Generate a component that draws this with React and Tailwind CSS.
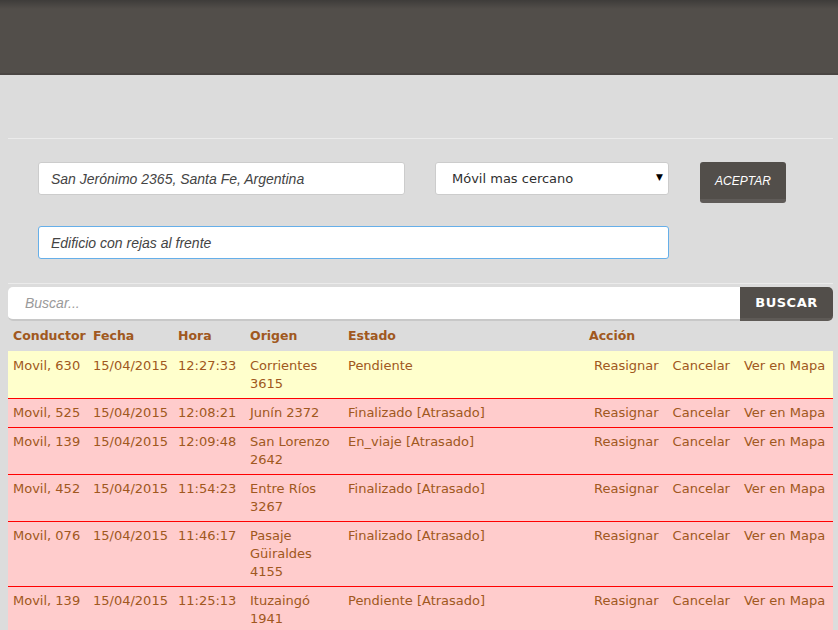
import React from 'react';

const rows = [
  { id: 1, conductor: 'Movil, 630', fecha: '15/04/2015', hora: '12:27:33', origen: 'Corrientes 3615', estado: 'Pendiente', late: false },
  { id: 2, conductor: 'Movil, 525', fecha: '15/04/2015', hora: '12:08:21', origen: 'Junín 2372', estado: 'Finalizado [Atrasado]', late: true },
  { id: 3, conductor: 'Movil, 139', fecha: '15/04/2015', hora: '12:09:48', origen: 'San Lorenzo 2642', estado: 'En_viaje [Atrasado]', late: true },
  { id: 4, conductor: 'Movil, 452', fecha: '15/04/2015', hora: '11:54:23', origen: 'Entre Ríos 3267', estado: 'Finalizado [Atrasado]', late: true },
  { id: 5, conductor: 'Movil, 076', fecha: '15/04/2015', hora: '11:46:17', origen: 'Pasaje Güiraldes 4155', estado: 'Finalizado [Atrasado]', late: true },
  { id: 6, conductor: 'Movil, 139', fecha: '15/04/2015', hora: '11:25:13', origen: 'Ituzaingó 1941', estado: 'Pendiente [Atrasado]', late: true },
];

const App = () => {
  return (
    <div className="min-h-screen bg-[#dcdcdc] font-['DejaVu_Sans',sans-serif]">
      <header className="h-[75px] bg-[linear-gradient(to_bottom,#3e3c3a,#524e4a_9px,#524e4a)] border-b-2 border-[#4a4643]" />

      <main className="pl-[8px] pr-[5px]">
        <div className="mt-[63px] h-px bg-[#ebebeb]" />

        <div className="pl-[30px] pt-[23px] pb-[24px]">
          <div className="flex items-start h-[33px] overflow-visible">
            <input
              readOnly
              defaultValue="San Jerónimo 2365, Santa Fe, Argentina"
              className="block shrink-0 w-[367px] h-[33px] px-[12px] bg-white border border-[#cccccc] rounded-[3px] font-['Liberation_Sans',sans-serif] italic text-[14px] text-[#444] outline-none"
            />
            <div className="relative shrink-0 ml-[30px] w-[234px] h-[33px] bg-white border border-[#cccccc] rounded-[3px] flex items-center pl-[16px] text-[13px] text-[#2f2f2f]">
              Móvil mas cercano
              <span className="absolute right-[5px] top-[8px] text-[9px] text-black">▼</span>
            </div>
            <button className="shrink-0 ml-[31px] w-[86px] h-[41px] bg-[#524e4a] border-b-[4px] border-[#5f5b58] rounded-[3px] font-['Liberation_Sans',sans-serif] italic text-[12px] text-white">
              ACEPTAR
            </button>
          </div>
          <input
            readOnly
            defaultValue="Edificio con rejas al frente"
            className="block mt-[31px] w-[631px] h-[33px] px-[12px] bg-white border border-[#66afe9] rounded-[3px] font-['Liberation_Sans',sans-serif] italic text-[14px] text-[#444] outline-none"
          />
        </div>

        <div className="h-px bg-[#ebebeb]" />

        <div className="mt-[3px] flex h-[34px]">
          <input
            placeholder="Buscar..."
            className="block flex-1 px-[17px] bg-white border-b-2 border-[#c8c8c8] rounded-l-[5px] font-['Liberation_Sans',sans-serif] italic text-[14px] placeholder:text-[#9a9a9a] outline-none"
          />
          <button className="w-[93px] bg-[#524e4a] border-b-[3px] border-[#5e5a56] rounded-r-[5px] font-bold text-[13px] tracking-[0.5px] text-white">
            BUSCAR
          </button>
        </div>

        <table className="w-[825px] table-fixed border-collapse text-[13px] leading-[18px] text-[#a05820]">
          <colgroup>
            <col className="w-[80px]" />
            <col className="w-[85px]" />
            <col className="w-[72px]" />
            <col className="w-[98px]" />
            <col className="w-[241px]" />
            <col className="w-[249px]" />
          </colgroup>
          <thead>
            <tr className="text-left text-[12.5px] font-bold">
              <th className="px-[5px] py-[6px]">Conductor</th>
              <th className="px-[5px] py-[6px]">Fecha</th>
              <th className="px-[5px] py-[6px]">Hora</th>
              <th className="px-[5px] py-[6px]">Origen</th>
              <th className="px-[5px] py-[6px]">Estado</th>
              <th className="px-[5px] py-[6px]">Acción</th>
            </tr>
          </thead>
          <tbody>
            {rows.map((r) => (
              <tr
                key={r.id}
                className={r.late ? 'bg-[#ffcccc] border-t border-[#ff0000]' : 'bg-[#ffffcc] border-t border-[#ffffcc]'}
              >
                <td className="align-top px-[5px] py-[5px] whitespace-nowrap">{r.conductor}</td>
                <td className="align-top px-[5px] py-[5px]">{r.fecha}</td>
                <td className="align-top px-[5px] py-[5px]">{r.hora}</td>
                <td className="align-top px-[5px] py-[5px]">{r.origen}</td>
                <td className="align-top px-[5px] py-[5px]">{r.estado}</td>
                <td className="align-top pl-[10px] pr-[5px] py-[5px]">
                  <div className="flex gap-[14px] whitespace-nowrap">
                    <a href="#">Reasignar</a>
                    <a href="#">Cancelar</a>
                    <a href="#">Ver en Mapa</a>
                  </div>
                </td>
              </tr>
            ))}
          </tbody>
        </table>
      </main>
    </div>
  );
};

export default App;
